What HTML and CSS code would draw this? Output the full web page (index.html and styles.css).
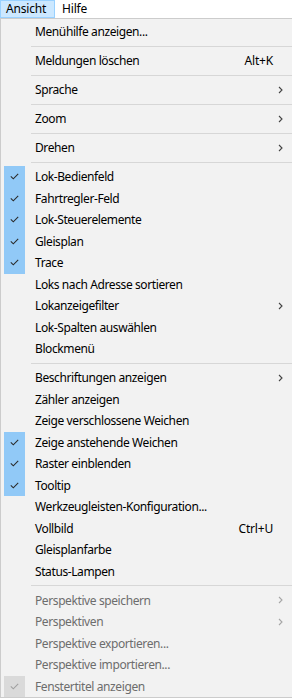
FILE: index.html
```html
<!DOCTYPE html>
<html lang="de">
<head>
<meta charset="utf-8">
<link rel="stylesheet" href="styles.css">
</head>
<body>
<div class="menubar">
  <span class="top active">Ansicht</span>
  <span class="top">Hilfe</span>
</div>
<div class="panel">
  <div class="item"><span class="chk"></span><span class="label">Menühilfe anzeigen...</span></div>
  <div class="sep"></div>
  <div class="item"><span class="chk"></span><span class="label">Meldungen löschen</span><span class="key">Alt+K</span></div>
  <div class="sep"></div>
  <div class="item"><span class="chk"></span><span class="label">Sprache</span><span class="arrow"><svg width="5" height="8" viewBox="0 0 5 8"><path d="M1 1 L4 4 L1 7" fill="none" stroke="currentColor" stroke-width="1.1"/></svg></span></div>
  <div class="sep"></div>
  <div class="item"><span class="chk"></span><span class="label">Zoom</span><span class="arrow"><svg width="5" height="8" viewBox="0 0 5 8"><path d="M1 1 L4 4 L1 7" fill="none" stroke="currentColor" stroke-width="1.1"/></svg></span></div>
  <div class="sep"></div>
  <div class="item"><span class="chk"></span><span class="label">Drehen</span><span class="arrow"><svg width="5" height="8" viewBox="0 0 5 8"><path d="M1 1 L4 4 L1 7" fill="none" stroke="currentColor" stroke-width="1.1"/></svg></span></div>
  <div class="sep"></div>
  <div class="item"><span class="chk on"><svg width="9" height="7" viewBox="0 0 9 7"><path d="M0.8 3.4 L3.3 5.8 L8.2 0.9" fill="none" stroke="currentColor" stroke-width="1.1"/></svg></span><span class="label">Lok-Bedienfeld</span></div>
  <div class="item"><span class="chk on"><svg width="9" height="7" viewBox="0 0 9 7"><path d="M0.8 3.4 L3.3 5.8 L8.2 0.9" fill="none" stroke="currentColor" stroke-width="1.1"/></svg></span><span class="label">Fahrtregler-Feld</span></div>
  <div class="item"><span class="chk on"><svg width="9" height="7" viewBox="0 0 9 7"><path d="M0.8 3.4 L3.3 5.8 L8.2 0.9" fill="none" stroke="currentColor" stroke-width="1.1"/></svg></span><span class="label">Lok-Steuerelemente</span></div>
  <div class="item"><span class="chk on"><svg width="9" height="7" viewBox="0 0 9 7"><path d="M0.8 3.4 L3.3 5.8 L8.2 0.9" fill="none" stroke="currentColor" stroke-width="1.1"/></svg></span><span class="label">Gleisplan</span></div>
  <div class="item"><span class="chk on"><svg width="9" height="7" viewBox="0 0 9 7"><path d="M0.8 3.4 L3.3 5.8 L8.2 0.9" fill="none" stroke="currentColor" stroke-width="1.1"/></svg></span><span class="label">Trace</span></div>
  <div class="item"><span class="chk"></span><span class="label">Loks nach Adresse sortieren</span></div>
  <div class="item"><span class="chk"></span><span class="label">Lokanzeigefilter</span><span class="arrow"><svg width="5" height="8" viewBox="0 0 5 8"><path d="M1 1 L4 4 L1 7" fill="none" stroke="currentColor" stroke-width="1.1"/></svg></span></div>
  <div class="item"><span class="chk"></span><span class="label">Lok-Spalten auswählen</span></div>
  <div class="item"><span class="chk"></span><span class="label">Blockmenü</span></div>
  <div class="sep"></div>
  <div class="item"><span class="chk"></span><span class="label">Beschriftungen anzeigen</span><span class="arrow"><svg width="5" height="8" viewBox="0 0 5 8"><path d="M1 1 L4 4 L1 7" fill="none" stroke="currentColor" stroke-width="1.1"/></svg></span></div>
  <div class="item"><span class="chk"></span><span class="label">Zähler anzeigen</span></div>
  <div class="item"><span class="chk"></span><span class="label">Zeige verschlossene Weichen</span></div>
  <div class="item"><span class="chk on"><svg width="9" height="7" viewBox="0 0 9 7"><path d="M0.8 3.4 L3.3 5.8 L8.2 0.9" fill="none" stroke="currentColor" stroke-width="1.1"/></svg></span><span class="label">Zeige anstehende Weichen</span></div>
  <div class="item"><span class="chk on"><svg width="9" height="7" viewBox="0 0 9 7"><path d="M0.8 3.4 L3.3 5.8 L8.2 0.9" fill="none" stroke="currentColor" stroke-width="1.1"/></svg></span><span class="label">Raster einblenden</span></div>
  <div class="item"><span class="chk on"><svg width="9" height="7" viewBox="0 0 9 7"><path d="M0.8 3.4 L3.3 5.8 L8.2 0.9" fill="none" stroke="currentColor" stroke-width="1.1"/></svg></span><span class="label">Tooltip</span></div>
  <div class="item"><span class="chk"></span><span class="label">Werkzeugleisten-Konfiguration...</span></div>
  <div class="item"><span class="chk"></span><span class="label">Vollbild</span><span class="key">Ctrl+U</span></div>
  <div class="item"><span class="chk"></span><span class="label">Gleisplanfarbe</span></div>
  <div class="item"><span class="chk"></span><span class="label">Status-Lampen</span></div>
  <div class="sep"></div>
  <div class="item disabled"><span class="chk"></span><span class="label">Perspektive speichern</span><span class="arrow"><svg width="5" height="8" viewBox="0 0 5 8"><path d="M1 1 L4 4 L1 7" fill="none" stroke="currentColor" stroke-width="1.1"/></svg></span></div>
  <div class="item disabled"><span class="chk"></span><span class="label">Perspektiven</span><span class="arrow"><svg width="5" height="8" viewBox="0 0 5 8"><path d="M1 1 L4 4 L1 7" fill="none" stroke="currentColor" stroke-width="1.1"/></svg></span></div>
  <div class="item disabled"><span class="chk"></span><span class="label">Perspektive exportieren...</span></div>
  <div class="item disabled"><span class="chk"></span><span class="label">Perspektive importieren...</span></div>
  <div class="item disabled"><span class="chk on"><svg width="9" height="7" viewBox="0 0 9 7"><path d="M0.8 3.4 L3.3 5.8 L8.2 0.9" fill="none" stroke="currentColor" stroke-width="1.1"/></svg></span><span class="label">Fenstertitel anzeigen</span></div>
</div>
</body>
</html>
```
FILE: styles.css
```css
html, body {
  margin: 0;
  padding: 0;
  background: #ffffff;
  width: 292px;
  height: 700px;
  overflow: hidden;
}
body {
  font-family: "Noto Sans", "Open Sans", "DejaVu Sans", sans-serif;
  font-size: 12px;
  color: #000000;
}
.menubar {
  height: 18px;
  display: flex;
  align-items: stretch;
  background: #ffffff;
}
.top {
  display: flex;
  align-items: center;
  padding: 0 7px 0 6px;
  line-height: 16px;
  border: 1px solid transparent;
  letter-spacing: -0.2px;
}
.top.active {
  background: #cce8ff;
  border-color: #99d1ff;
  padding: 0 8px 0 5px;
}
.panel {
  background: #f2f2f2;
  border-top: 1px solid #cccccc;
  border-left: 1px solid #cccccc;
  border-bottom: 1px solid #cccccc;
  height: 680px;
  box-sizing: border-box;
  padding-top: 2px;
  overflow: hidden;
}
.item {
  height: 21.5px;
  display: flex;
  align-items: center;
  padding-left: 3px;
  padding-right: 9px;
  white-space: nowrap;
}
.chk {
  width: 21px;
  height: 21.5px;
  flex: none;
  display: flex;
  align-items: center;
  justify-content: center;
  color: #2b2b2b;
}
.chk.on {
  background: #91c9f7;
}
.label {
  margin-left: 10px;
  flex: 1;
  letter-spacing: -0.4px;
}
.key {
  margin-right: 10px;
  letter-spacing: -0.2px;
}
.arrow {
  display: flex;
  align-items: center;
  color: #444444;
}
.sep {
  height: 1px;
  margin: 3.25px 0 3.25px 30px;
  background: #d7d7d7;
}
.disabled {
  color: #6d6d6d;
}
.disabled .arrow {
  color: #a6a6a6;
}
.disabled .chk {
  color: #a0a0a0;
}
.disabled .chk.on {
  background: #dadada;
}
```
